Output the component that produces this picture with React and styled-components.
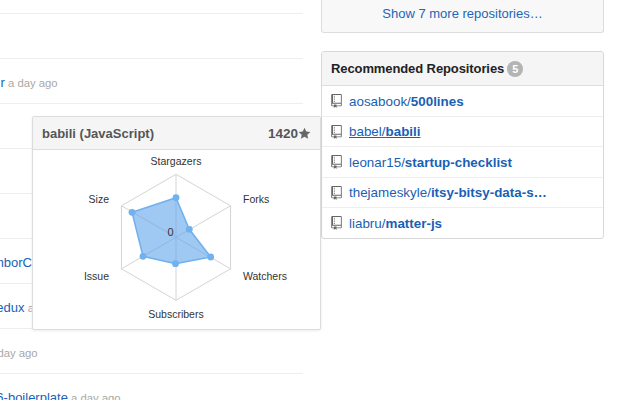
import React from "react";
import styled, { createGlobalStyle } from "styled-components";

const Global = createGlobalStyle`
  html, body { margin: 0; padding: 0; background: #fff; }
  body { font-family: "Liberation Sans", Arial, sans-serif; -webkit-font-smoothing: antialiased; }
  #root { width: 640px; height: 400px; }
`;

const Page = styled.div`
  position: relative;
  width: 640px;
  height: 400px;
  overflow: hidden;
  display: flex;
  align-items: flex-start;
  gap: 18px;
  background: #fff;
`;

const Feed = styled.div`
  width: 303px;
  flex: none;
  margin-top: -31px;
  overflow: hidden;
`;

const FeedRow = styled.div`
  box-sizing: border-box;
  height: 45px;
  border-bottom: 1px solid #eeeeee;
  padding-top: 15px;
  line-height: 16px;
  white-space: nowrap;
`;

const FeedText = styled.span`
  display: inline-block;
  margin-left: ${(p) => p.$shift}px;
  color: #a8a8a8;
  font-size: 11.3px;
`;

const FeedLink = styled.span`
  color: #1a62b8;
  font-size: 13px;
`;

const Side = styled.div`
  width: 283px;
  flex: none;
  display: flex;
  flex-direction: column;
  gap: 18px;
`;

const MorePanel = styled.div`
  box-sizing: border-box;
  height: 33px;
  background: #f8f8f8;
  border: 1px solid #dddddd;
  border-top: 0;
  border-radius: 0 0 3px 3px;
  color: #2166b8;
  font-size: 13px;
  line-height: 28px;
  text-align: center;
`;

const Panel = styled.div`
  box-sizing: border-box;
  border: 1px solid #d8d8d8;
  border-radius: 3px;
  background: #fff;
`;

const PanelHead = styled.div`
  box-sizing: border-box;
  height: 34px;
  display: flex;
  align-items: center;
  gap: 3px;
  padding-left: 9px;
  background: #f5f5f5;
  border-bottom: 1px solid #dddddd;
  border-radius: 3px 3px 0 0;
  color: #222;
  font-size: 13px;
  font-weight: 700;
  letter-spacing: -0.1px;
`;

const Count = styled.span`
  width: 16px;
  height: 16px;
  border-radius: 50%;
  background: #b4b4b4;
  color: #fff;
  font-size: 11px;
  font-weight: 700;
  line-height: 16px;
  text-align: center;
`;

const RepoRow = styled.div`
  box-sizing: border-box;
  height: ${(p) => p.$h}px;
  display: flex;
  align-items: center;
  gap: 7px;
  padding-left: 9px;
  border-bottom: 1px solid #eeeeee;
  font-size: 13.4px;
  white-space: nowrap;
  &:last-child { border-bottom: 0; }
`;

const RepoIcon = styled.svg`
  width: 11px;
  height: 14px;
  flex: none;
  fill: #666;
`;

const RepoLink = styled.span`
  color: #1a5fb4;
  text-decoration: ${(p) => (p.$hover ? "underline" : "none")};
`;

const RepoName = styled.b`
  font-weight: 700;
`;

const Card = styled.div`
  position: absolute;
  left: 32px;
  top: 116px;
  width: 289px;
  height: 214px;
  box-sizing: border-box;
  background: #fff;
  border: 1px solid #dcdcdc;
  border-radius: 2px;
  box-shadow: 0 1px 3px rgba(0, 0, 0, 0.08);
  display: flex;
  flex-direction: column;
`;

const CardHead = styled.div`
  box-sizing: border-box;
  height: 33px;
  flex: none;
  display: flex;
  align-items: center;
  justify-content: space-between;
  padding: 0 9px;
  background: #f5f5f5;
  border-bottom: 1px solid #dddddd;
  color: #555;
  font-size: 13px;
  font-weight: 700;
`;

const Stars = styled.span`
  display: flex;
  align-items: center;
  font-size: 13.5px;
`;

const StarIcon = styled.svg`
  width: 13px;
  height: 13px;
  fill: #666;
`;

const Chart = styled.svg`
  display: block;
  width: 287px;
  height: 179px;
  font-family: "Liberation Sans", Arial, sans-serif;
  font-size: 10.5px;
  fill: #333;
`;

const feed = [
  { shift: 0 },
  { shift: 0 },
  { shift: 0.5, link: "r", tail: " a day ago" },
  { shift: 0 },
  { shift: 0 },
  { shift: 0 },
  { shift: -7, link: "mborCamp", tail: "" },
  { shift: -8, link: "redux", tail: " a day ago" },
  { shift: -12, link: "", tail: "a day ago" },
  { shift: -21, link: "ES6-boilerplate", tail: " a day ago" },
];

const repos = [
  { owner: "aosabook", name: "500lines", h: 31 },
  { owner: "babel", name: "babili", h: 30, hover: true },
  { owner: "leonar15", name: "startup-checklist", h: 31 },
  { owner: "thejameskyle", name: "itsy-bitsy-data-s…", h: 30 },
  { owner: "liabru", name: "matter-js", h: 30 },
];

const C = { x: 176, y: 237.3, r: 63 };
const hex = [0, 1, 2, 3, 4, 5].map((i) => {
  const a = (Math.PI / 3) * i;
  return [C.x + C.r * Math.sin(a), C.y - C.r * Math.cos(a)];
});
const points = [
  [176, 197.7],
  [189.3, 229.3],
  [210.7, 257],
  [175.5, 263.7],
  [143, 256.3],
  [132, 212.3],
];
const toStr = (list) => list.map((p) => p.join(",")).join(" ");

const labels = [
  { t: "Stargazers", x: 176, y: 165, a: "middle" },
  { t: "Forks", x: 243, y: 203, a: "start" },
  { t: "Watchers", x: 243, y: 280, a: "start" },
  { t: "Subscribers", x: 176, y: 318, a: "middle" },
  { t: "Issue", x: 109, y: 280, a: "end" },
  { t: "Size", x: 109, y: 203, a: "end" },
];

const Book = () => (
  <RepoIcon viewBox="0 0 12 16">
    <path d="M4 9H3V8h1v1zm0-3H3v1h1V6zm0-2H3v1h1V4zm0-2H3v1h1V2zm8-1v12c0 .55-.45 1-1 1H6v2l-1.5-1.5L3 16v-2H1c-.55 0-1-.45-1-1V1c0-.55.45-1 1-1h10c.55 0 1 .45 1 1zm-1 10H1v2h2v-1h3v1h5v-2zm0-10H2v9h9V1z" />
  </RepoIcon>
);

export default function App() {
  return (
    <Page>
      <Global />
      <Feed>
        {feed.map((r, i) => (
          <FeedRow key={i}>
            {(r.link || r.tail) && (
              <FeedText $shift={r.shift}>
                <FeedLink>{r.link}</FeedLink>
                {r.tail}
              </FeedText>
            )}
          </FeedRow>
        ))}
      </Feed>
      <Side>
        <MorePanel>Show 7 more repositories…</MorePanel>
        <Panel>
          <PanelHead>
            Recommended Repositories <Count>5</Count>
          </PanelHead>
          {repos.map((r) => (
            <RepoRow key={r.owner} $h={r.h}>
              <Book />
              <RepoLink $hover={r.hover}>
                {r.owner}/<RepoName>{r.name}</RepoName>
              </RepoLink>
            </RepoRow>
          ))}
        </Panel>
      </Side>
      <Card>
        <CardHead>
          <span>babili (JavaScript)</span>
          <Stars>
            1420
            <StarIcon viewBox="0 0 24 24">
              <path d="M12 1.5l3.2 7 7.6.8-5.7 5.1 1.6 7.5L12 18.1l-6.7 3.8 1.6-7.5L1.2 9.3l7.6-.8z" />
            </StarIcon>
          </Stars>
        </CardHead>
        <Chart viewBox="33 150 287 179">
          <polygon points={toStr(hex)} fill="none" stroke="#d4d4d4" strokeWidth="1" />
          {hex.map((p, i) => (
            <line key={i} x1={C.x} y1={C.y} x2={p[0]} y2={p[1]} stroke="#d4d4d4" strokeWidth="1" />
          ))}
          <polygon points={toStr(points)} fill="rgba(90,160,235,0.58)" stroke="#6fb0ee" strokeWidth="1.5" />
          {points.map((p, i) => (
            <circle key={i} cx={p[0]} cy={p[1]} r="3.4" fill="#71b1ee" />
          ))}
          <text x="170.5" y="235.5" textAnchor="middle" fontSize="11">0</text>
          {labels.map((l) => (
            <text key={l.t} x={l.x} y={l.y} textAnchor={l.a}>{l.t}</text>
          ))}
        </Chart>
      </Card>
    </Page>
  );
}
